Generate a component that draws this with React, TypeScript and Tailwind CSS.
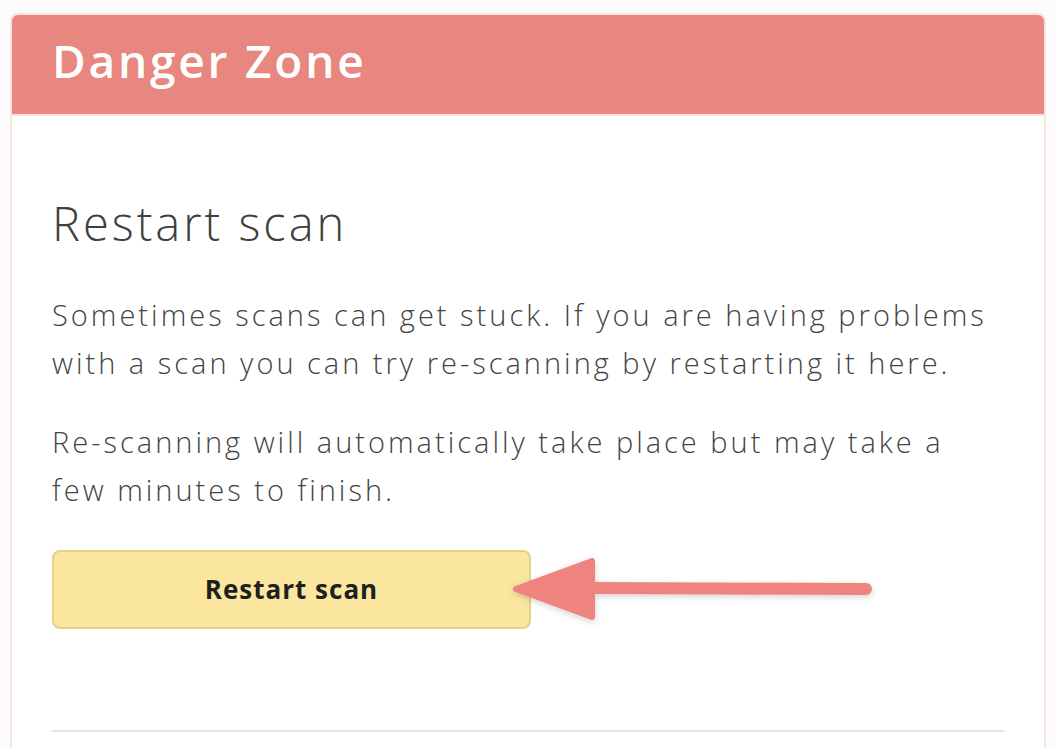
export default function App() {
  return (
    <div className="relative min-h-[748px] overflow-hidden bg-[#fcfcfc] pl-[10px] pt-[13px] font-['Open_Sans',sans-serif]">
      <div className="w-[1036px] overflow-hidden rounded-t-[8px] border-2 border-b-0 border-[#fbe3e3] bg-white">
        <div className="flex h-[101px] items-center border-b-2 border-[#fbe3e3] bg-[#e8877f] px-[40px] pb-[9px]">
          <h1 className="text-[46px] font-semibold leading-none tracking-[2.8px] text-white">Danger Zone</h1>
        </div>

        <div className="px-[40px] pt-[79px] pb-[40px]">
          <h2 className="text-[47px] font-light leading-[56px] tracking-[3px] text-[#3f3f3f]">Restart scan</h2>

          <p className="mt-[40px] w-[940px] text-[29px] font-light leading-[48px] tracking-[3px] text-[#444]">
            Sometimes scans can get stuck. If you are having problems with a scan you can try re-scanning by restarting it here.
          </p>
          <p className="mt-[31px] w-[940px] text-[29px] font-light leading-[48px] tracking-[3px] text-[#444]">
            Re-scanning will automatically take place but may take a few minutes to finish.
          </p>

          <button className="mt-[36px] h-[79px] w-[479px] rounded-[8px] border-2 border-[#e3d28c] bg-[#fae69e] text-[26px] font-bold tracking-[1px] text-[#1f1f1f]">
            Restart scan
          </button>

          <div className="mt-[101px] h-[2px] w-[952px] bg-[#e5e5e5]" />
        </div>
      </div>

      {/* annotation arrow */}
      <svg className="absolute left-0 top-0" width="1056" height="748">
        <defs>
          <filter id="sh" x="-10%" y="-50%" width="120%" height="200%">
            <feDropShadow dx="0" dy="2" stdDeviation="3" floodColor="#000" floodOpacity="0.18" />
          </filter>
        </defs>
        <g filter="url(#sh)" fill="#ef837f" stroke="#ef837f" strokeLinejoin="round" strokeLinecap="round">
          <line x1="585" y1="588" x2="866" y2="589" strokeWidth="12" />
          <polygon points="516,589 592,561 592,617" strokeWidth="6" />
        </g>
      </svg>
    </div>
  );
}
